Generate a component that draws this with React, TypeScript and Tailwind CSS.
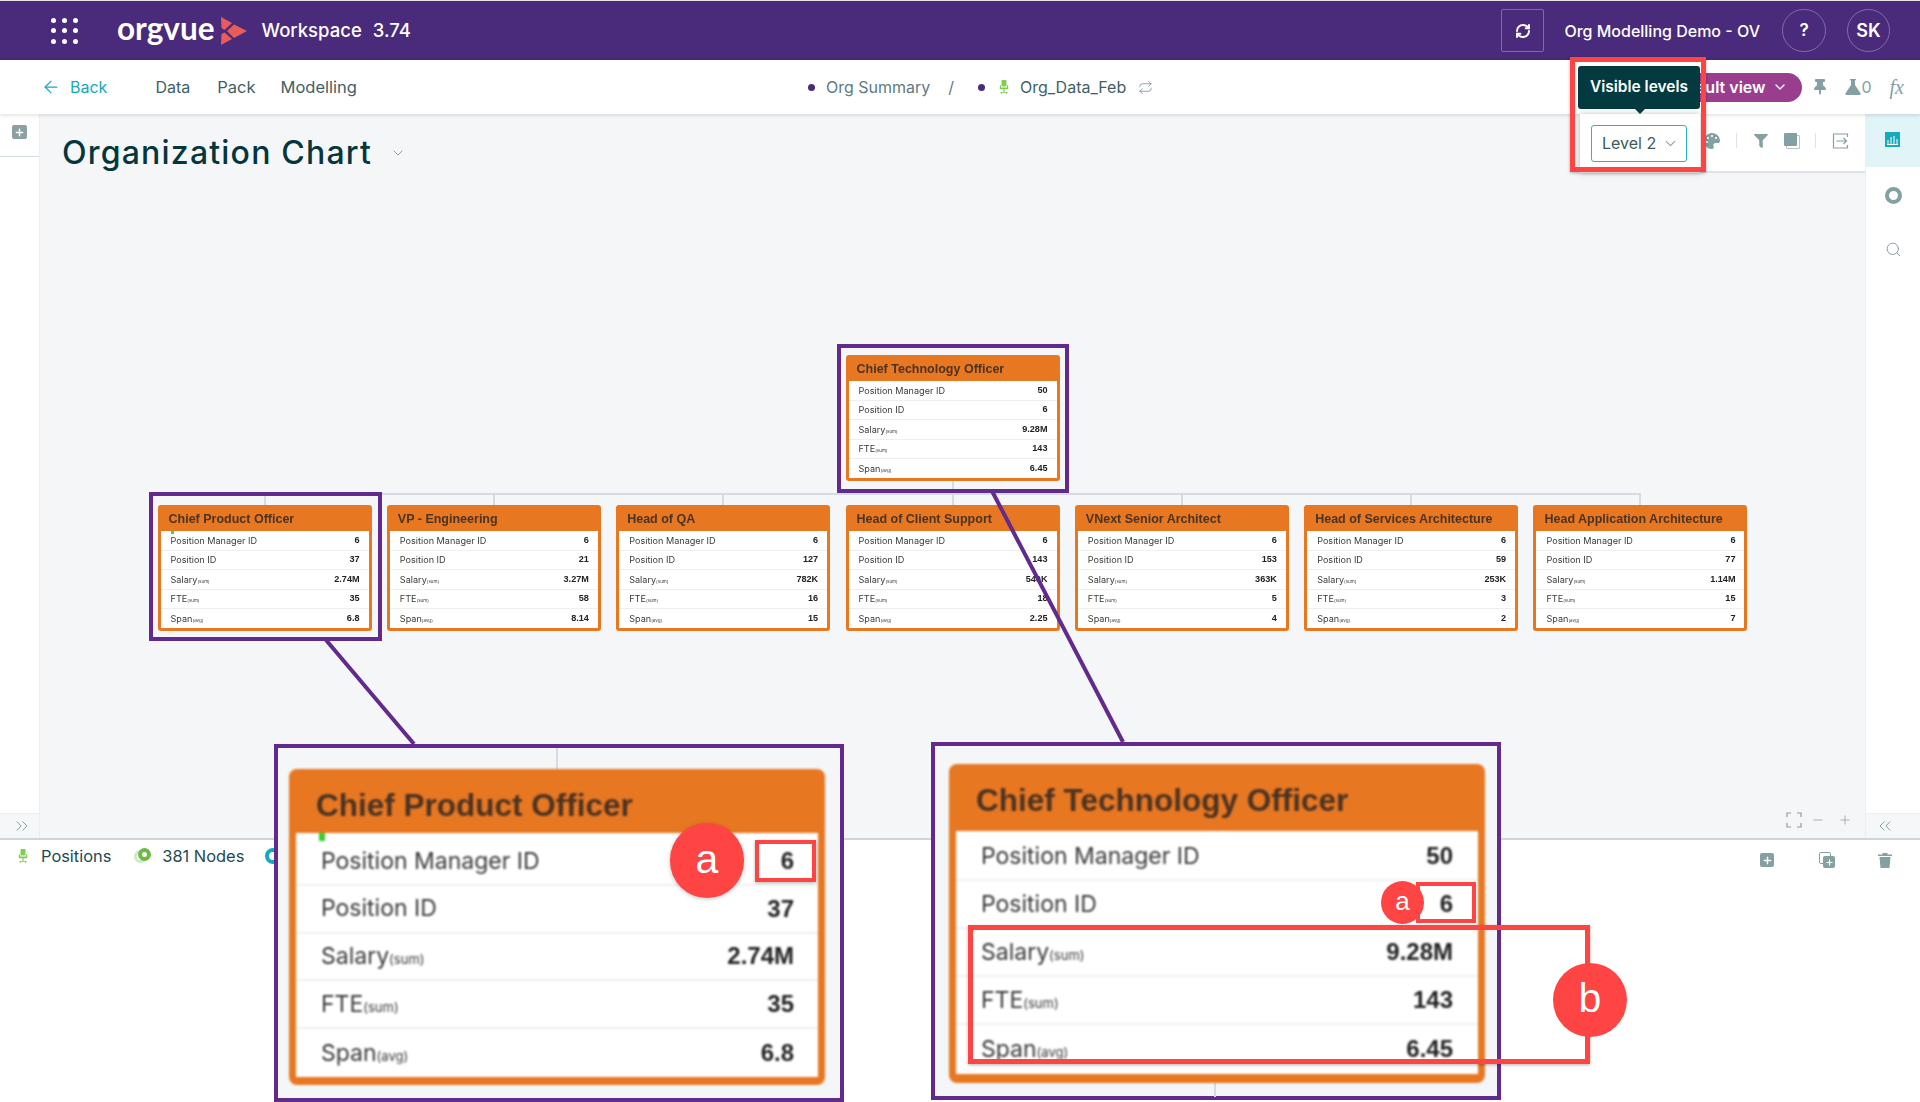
import React from "react";
import { ArrowLeft, ChevronDown, RefreshCw, Search, Repeat, ChevronsRight, ChevronsLeft, Plus, Minus } from "lucide-react";
import { FaFilter, FaPalette, FaThumbtack } from "react-icons/fa";

type CardData = { title: string; rows: [string, string, string, string, string] };

const S = {
  sm: {
    card: "w-[214px] h-[126px] rounded-[3px] blur-[0.45px]",
    head: "h-[26px] pl-[11px] pt-[2px] text-[12.5px]",
    body: "mx-[3px] h-[97px] pt-[1px]",
    row: "h-[19.2px] pl-[10px] pr-[9px] text-[9.1px]",
    sub: "text-[4.5px]",
    val: "",
    div: "border-b border-[#eef0f0]",
  },
  lg: {
    card: "w-[536px] h-[316px] rounded-[8px] blur-[1px]",
    head: "h-[64px] pl-[27px] pt-[9px] text-[31.5px]",
    body: "mx-[7px] h-[244px] pt-[5px]",
    row: "h-[47.8px] pl-[25px] pr-[24px] text-[23px]",
    sub: "text-[13px]",
    val: "text-[24px]",
    div: "border-b-2 border-[#eef0f0]",
  },
  lg2: {
    card: "w-[536px] h-[319px] rounded-[8px] blur-[1px]",
    head: "h-[67px] pl-[27px] pt-[6px] text-[31.5px]",
    body: "mx-[7px] h-[243px] pt-[2px]",
    row: "h-[48px] pl-[25px] pr-[25px] text-[23px]",
    sub: "text-[13px]",
    val: "text-[24px]",
    div: "border-b-2 border-[#eef0f0]",
  },
};

function Card({ data, size, flag }: { data: CardData; size: "sm" | "lg" | "lg2"; flag?: boolean }) {
  const s = S[size];
  const labels = [
    { l: "Position Manager ID" },
    { l: "Position ID" },
    { l: "Salary", u: "(sum)" },
    { l: "FTE", u: "(sum)" },
    { l: "Span", u: "(avg)" },
  ];
  return (
    <div className={`relative overflow-hidden bg-[#e87722] shrink-0 [font-family:'Liberation_Sans',sans-serif] ${s.card}`}>
      <div className={`flex items-center font-bold text-[#4a3322] ${s.head}`}>{data.title}</div>
      <div className={`relative flex flex-col bg-white ${s.body}`}>
        {labels.map((r, i) => (
          <div key={r.l} className={`shrink-0 flex items-center justify-between text-[#3a3a3a] [font-family:Inter,sans-serif] ${s.row} ${i < 4 ? s.div : ""}`}>
            <span>
              {r.l}
              {r.u ? <span className={s.sub}>{r.u}</span> : null}
            </span>
            <span className={`font-bold text-[#222] [font-family:'Liberation_Sans',sans-serif] ${s.val}`}>{data.rows[i]}</span>
          </div>
        ))}
        {flag ? (
          size === "sm" ? (
            <span className="absolute left-[10px] top-0 w-[3px] h-[3px] bg-[#35e02a]" />
          ) : (
            <span className="absolute left-[23px] top-0 w-[6px] h-[8px] bg-[#35d02a]" />
          )
        ) : null}
      </div>
    </div>
  );
}

const top: CardData = { title: "Chief Technology Officer", rows: ["50", "6", "9.28M", "143", "6.45"] };
const cards: CardData[] = [
  { title: "Chief Product Officer", rows: ["6", "37", "2.74M", "35", "6.8"] },
  { title: "VP - Engineering", rows: ["6", "21", "3.27M", "58", "8.14"] },
  { title: "Head of QA", rows: ["6", "127", "782K", "16", "15"] },
  { title: "Head of Client Support", rows: ["6", "143", "540K", "18", "2.25"] },
  { title: "VNext Senior Architect", rows: ["6", "153", "363K", "5", "4"] },
  { title: "Head of Services Architecture", rows: ["6", "59", "253K", "3", "2"] },
  { title: "Head Application Architecture", rows: ["6", "77", "1.14M", "15", "7"] },
];

function Chair({ className }: { className?: string }) {
  return (
    <svg viewBox="0 0 12 18" className={className} fill="currentColor">
      <rect x="3" y="0.5" width="6" height="8" rx="1.2" />
      <rect x="1" y="7" width="1.4" height="4" />
      <rect x="9.6" y="7" width="1.4" height="4" />
      <rect x="1" y="9.5" width="10" height="2.2" rx="0.6" />
      <rect x="5.3" y="11" width="1.4" height="4" />
      <path d="M1.5 15h9v1h-1v1.5h-1V16h-5v1.5h-1V16h-1z" />
    </svg>
  );
}

function Ring({ className }: { className?: string }) {
  return <span className={`inline-block rounded-full ${className}`} />;
}

export default function App() {
  return (
    <div className="relative w-[1920px] h-[1102px] overflow-hidden bg-white flex flex-col text-[#3f5f66] [font-family:Inter,sans-serif]">
      {/* top bar */}
      <div className="shrink-0 h-[1px] bg-[#e5e5e5]" />
      <header className="shrink-0 h-[59px] bg-[#4a2a7b] flex items-center text-white">
        <div className="ml-[51px] grid grid-cols-3 gap-x-[6px] gap-y-[5.5px]">
          {Array.from({ length: 9 }).map((_, i) => (
            <span key={i} className="w-[5px] h-[5px] rounded-full bg-white" />
          ))}
        </div>
        <span className="ml-[39px] text-[31.5px] font-bold leading-none [font-family:Lato,sans-serif] pb-[3px]">orgvue</span>
        <svg viewBox="0 0 27 28" className="ml-[5px] w-[27px] h-[28px]" fill="#e85d5a">
          <path d="M1 0 L12 6 L4.5 13 L1.5 11 Z" />
          <path d="M1 28 L12 22 L4.5 15.5 L1.5 17 Z" />
          <path d="M7 14 L14 7.5 L27 14 L14 21 Z" />
        </svg>
        <span className="ml-[15px] text-[18.5px] font-medium">Workspace</span>
        <span className="ml-[11px] text-[18.5px] font-medium">3.74</span>
        <div className="ml-auto flex items-center pr-[30px]">
          <div className="w-[43px] h-[43px] rounded-[2px] border border-white/30 flex items-center justify-center">
            <RefreshCw className="w-[16px] h-[16px]" strokeWidth={3} />
          </div>
          <span className="ml-[20px] text-[16px] font-medium">Org Modelling Demo - OV</span>
          <div className="ml-[22px] w-[44px] h-[43px] rounded-full border border-white/30 flex items-center justify-center text-[17px] font-semibold">?</div>
          <div className="ml-[21px] w-[43px] h-[43px] rounded-full border border-white/30 flex items-center justify-center text-[18px] font-semibold">SK</div>
        </div>
      </header>

      {/* nav bar */}
      <nav className="relative z-10 shrink-0 h-[54px] bg-white flex items-center shadow-[0_1px_4px_rgba(0,0,0,0.15)] text-[16px]">
        <ArrowLeft className="ml-[41px] w-[20px] h-[20px] text-[#17a8bd]" strokeWidth={1.5} />
        <span className="ml-[9px] text-[#17a8bd]">Back</span>
        <span className="ml-[48px]">Data</span>
        <span className="ml-[27px] text-[16.5px]">Pack</span>
        <span className="ml-[25px] text-[16.5px]">Modelling</span>
        <span className="ml-[451px] w-[7px] h-[7px] rounded-full bg-[#4a2a7b]" />
        <span className="ml-[11px] text-[#5d7a80]">Org Summary</span>
        <span className="ml-[18px] text-[#5d7a80]">/</span>
        <span className="ml-[24px] w-[7px] h-[7px] rounded-full bg-[#4a2a7b]" />
        <Chair className="ml-[14px] w-[10px] h-[16px] text-[#7ccf4f]" />
        <span className="ml-[11px]">Org_Data_Feb</span>
        <Repeat className="ml-[12px] w-[15px] h-[15px] text-[#8aa0a3]" strokeWidth={1.5} />
        <div className="ml-auto flex items-center h-[29px] w-[145px] rounded-full bg-[#9b3d8f] text-white font-semibold justify-end pr-[14px]">
          <span>Default view</span>
          <ChevronDown className="ml-[7px] w-[16px] h-[16px]" strokeWidth={2} />
        </div>
        <FaThumbtack className="ml-[12px] w-[12px] h-[16px] text-[#85a0a3]" />
        <svg viewBox="0 0 16 16" className="ml-[19px] w-[16px] h-[16px] text-[#85a0a3]" fill="currentColor">
          <path d="M5 0h6v1.2h-1V6l5.5 8.3c.5.8 0 1.7-1 1.7H1.5c-1 0-1.5-.9-1-1.7L6 6V1.2H5z" />
        </svg>
        <span className="text-[16px] text-[#85a0a3]">0</span>
        <span className="ml-[18px] mr-[16px] text-[20px] italic text-[#85a0a3] [font-family:'Liberation_Serif',serif]">fx</span>
      </nav>

      {/* main */}
      <div className="flex-1 min-h-0 flex">
        {/* left rail */}
        <aside className="w-[40px] shrink-0 bg-white border-r border-[#eceff1] flex flex-col">
          <div className="h-[43px] border-b border-[#d5dcdc] pt-[11px] pl-[12px]">
            <div className="w-[15px] h-[14px] rounded-[2px] bg-[#8aa0a3] flex items-center justify-center">
              <Plus className="w-[11px] h-[11px] text-white" strokeWidth={3} />
            </div>
          </div>
          <div className="mt-auto h-[25px] bg-[#f5f7f9] border-t border-[#eceff1] flex items-center pl-[12px]">
            <ChevronsRight className="w-[20px] h-[20px] text-[#85a0a3]" strokeWidth={1.2} />
          </div>
        </aside>

        {/* canvas */}
        <main className="flex-1 min-w-0 bg-[#f5f6f8] flex flex-col">
          <div className="h-[59px] shrink-0 flex">
            <div className="flex items-center pl-[22px] pt-[18px]">
              <h1 className="text-[32px] font-medium text-[#04363d] tracking-[1.2px]">Organization Chart</h1>
              <ChevronDown className="ml-[18px] w-[16px] h-[16px] text-[#85a0a3]" strokeWidth={1.5} />
            </div>
            <div className="ml-auto w-[285px] bg-white border-b-2 border-[#dfe3e8] flex items-center pb-[4px] text-[#85a0a3]">
              <FaPalette className="ml-[124px] w-[16px] h-[16px]" />
              <span className="ml-[16px] w-px h-[15px] bg-[#dfe3e8]" />
              <FaFilter className="ml-[17px] w-[14px] h-[14px]" />
              <span className="relative ml-[16px] w-[15px] h-[15px]">
                <span className="absolute left-0 top-0 w-[13px] h-[13px] rounded-[1px] bg-[#85a0a3] z-[1]" />
                <span className="absolute left-[2px] top-[2px] w-[14px] h-[14px] rounded-[1px] border border-[#b6c6c8]" />
              </span>
              <span className="ml-[16px] w-px h-[15px] bg-[#dfe3e8]" />
              <svg viewBox="0 0 16 16" className="ml-[16px] w-[17px] h-[16px]" fill="none" stroke="currentColor" strokeWidth="1.2">
                <path d="M15 4V1H1v14h14v-3" />
                <path d="M4 8h10M11 5l3 3-3 3" />
              </svg>
            </div>
          </div>

          {/* tree */}
          <div className="flex-1 min-h-0 flex flex-col items-center pt-[182px]">
            <Card data={top} size="sm" />
            <div className="w-[2px] h-[12px] bg-[#d5dbe3]" />
            <div className="w-[1376px] h-[2px] bg-[#d5dbe3]" />
            <div className="flex gap-[15.33px]">
              {cards.map((c, i) => (
                <div key={c.title} className="flex flex-col items-center">
                  <div className="w-[2px] h-[10px] bg-[#d5dbe3]" />
                  <Card data={c} size="sm" flag={i === 0} />
                </div>
              ))}
            </div>
          </div>

          <div className="h-[24px] shrink-0 flex items-start justify-end text-[#85a0a3]">
            <svg viewBox="0 0 16 16" className="mt-[-2px] w-[16px] h-[16px]" fill="none" stroke="currentColor" strokeWidth="1.2">
              <path d="M1 5V1h4M11 1h4v4M15 11v4h-4M5 15H1v-4" />
            </svg>
            <Minus className="ml-[9px] mt-[-1px] w-[14px] h-[14px]" strokeWidth={1.3} />
            <Plus className="ml-[13px] mt-[-1px] w-[14px] h-[14px] mr-[13px]" strokeWidth={1.3} />
          </div>
        </main>

        {/* right rail */}
        <aside className="w-[55px] shrink-0 bg-white border-l border-[#eceff1] flex flex-col items-center text-[#85a0a3]">
          <div className="w-full h-[53px] bg-[#e1f4f7] flex items-center justify-center pb-[2px] pr-[2px]">
            <svg viewBox="0 0 15 15" className="w-[15px] h-[15px]">
              <rect width="15" height="15" fill="#16aabb" />
              <path d="M3 12V8M6 12V5M9 12V4M12 12V7M2 12.5h11" stroke="#fff" strokeWidth="1" />
            </svg>
          </div>
          <Ring className="mt-[20px] w-[17px] h-[17px] border-[4.5px] border-[#85a0a3]" />
          <Search className="mt-[37px] w-[17px] h-[17px]" strokeWidth={1.4} />
          <div className="mt-auto w-full h-[25px] bg-[#f5f7f9] border-t border-[#eceff1] flex items-center pl-[9px]">
            <ChevronsLeft className="w-[20px] h-[20px]" strokeWidth={1.2} />
          </div>
        </aside>
      </div>

      {/* bottom strip */}
      <div className="shrink-0 h-[264px] bg-white border-t-2 border-[#cfd6da]">
        <div className="h-[32px] flex items-center text-[16.4px] text-[#1d4a52]">
          <Chair className="ml-[18px] w-[10px] h-[16px] text-[#7ccf4f]" />
          <span className="ml-[13px]">Positions</span>
          <span className="relative ml-[25px] w-[16px] h-[16px]">
            <Ring className="absolute left-[-2px] top-[2px] w-[13px] h-[13px] border-[3px] border-[#cfe9c4]" />
            <Ring className="absolute left-[2px] top-0 w-[13px] h-[13px] border-[4px] border-[#6dbb45] bg-white" />
          </span>
          <span className="ml-[10px]">381 Nodes</span>
          <Ring className="ml-[21px] w-[16px] h-[16px] border-[4px] border-[#17a8bd]" />
          <div className="ml-auto mt-[8px] flex items-center text-[#85a0a3]">
            <div className="w-[14px] h-[14px] rounded-[2px] bg-[#85a0a3] flex items-center justify-center">
              <Plus className="w-[11px] h-[11px] text-white" strokeWidth={3} />
            </div>
            <span className="relative ml-[45px] w-[16px] h-[16px]">
              <span className="absolute left-0 top-0 w-[12px] h-[12px] rounded-[2px] border border-[#85a0a3]" />
              <span className="absolute left-[4px] top-[4px] w-[12px] h-[12px] rounded-[2px] bg-[#85a0a3] flex items-center justify-center">
                <Plus className="w-[9px] h-[9px] text-white" strokeWidth={3} />
              </span>
            </span>
            <svg viewBox="0 0 14 16" className="ml-[43px] mr-[28px] w-[14px] h-[16px]" fill="currentColor">
              <path d="M4.5 1h5v1.5H14V4H0V2.5h4.5zM1.5 5h11l-1 11h-9z" />
            </svg>
          </div>
        </div>
      </div>

      {/* annotation overlay */}
      <svg className="absolute left-0 top-0 z-20 w-[1920px] h-[1102px] pointer-events-none" viewBox="0 0 1920 1102" fill="none" stroke="#622a8c" strokeWidth="4">
        <path d="M326 640 L414 744" />
        <path d="M992 491 L1123 742" />
        <rect x="839" y="346" width="228" height="145" />
        <rect x="151" y="494" width="229" height="145" />
      </svg>

      <div className="absolute z-20 left-[274px] top-[744px] w-[570px] h-[358px] border-[4px] border-[#622a8c] bg-[#f5f6f8]">
        <div className="ml-[278px] w-[2px] h-[21px] bg-[#d5dbe3]" />
        <div className="ml-[11px]">
          <Card data={cards[0]} size="lg" flag />
        </div>
      </div>
      <div className="absolute z-20 left-[931px] top-[742px] w-[570px] h-[358px] border-[4px] border-[#622a8c] bg-[#f5f6f8]">
        <div className="ml-[14px] mt-[18px]">
          <Card data={top} size="lg2" />
        </div>
        <div className="ml-[279px] w-[2px] h-[14px] bg-[#d5dbe3]" />
      </div>

      {/* red marks */}
      <div className="absolute z-30 left-[755px] top-[840px] w-[61px] h-[42px] border-[4px] border-[#ff4444] shadow-[0_1px_3px_rgba(0,0,0,0.3)]" />
      <div className="absolute z-30 left-[670px] top-[823px] w-[74px] h-[75px] rounded-full bg-[#ff4444] shadow-[0_1px_4px_rgba(0,0,0,0.25)] flex items-center justify-center text-white text-[41px] leading-none pb-[3px] [font-family:'Liberation_Sans',sans-serif]">a</div>

      <div className="absolute z-30 left-[1416px] top-[882px] w-[60px] h-[41px] border-[4px] border-[#ff4444]" />
      <div className="absolute z-30 left-[1381px] top-[881px] w-[43px] h-[43px] rounded-full bg-[#ff4444] flex items-center justify-center text-white text-[26px] leading-none pb-[3px] [font-family:'Liberation_Sans',sans-serif]">a</div>
      <div className="absolute z-30 left-[968px] top-[925px] w-[622px] h-[139px] border-[5px] border-[#ff4444] shadow-[0_1px_3px_rgba(0,0,0,0.3)]" />
      <div className="absolute z-30 left-[1553px] top-[963px] w-[74px] h-[74px] rounded-full bg-[#ff4444] flex items-center justify-center text-white text-[41px] leading-none pb-[3px] [font-family:'Liberation_Sans',sans-serif]">b</div>

      {/* tooltip + popover */}
      <div className="absolute z-30 left-[1580px] top-[114px] w-[120px] h-[59px] bg-white shadow-[0_0_6px_rgba(0,0,0,0.25)]" />
      <div className="absolute z-30 left-[1591px] top-[125px] w-[96px] h-[37px] rounded-[3px] border border-[#2bb4c6] bg-white flex items-center pl-[10px] pb-[1px] text-[16px] text-[#3a5a60]">
        Level 2
        <ChevronDown className="ml-[6px] w-[17px] h-[17px] text-[#85a0a3]" strokeWidth={1.5} />
      </div>
      <div className="absolute z-30 left-[1578px] top-[66px] w-[122px] h-[43px] rounded-[3px] bg-[#023a40] flex items-center justify-center pb-[2px] text-white text-[15.5px] font-semibold">Visible levels</div>
      <div className="absolute z-30 left-[1635px] top-[109px] w-0 h-0 border-x-[5px] border-x-transparent border-t-[5px] border-t-[#023a40]" />
      <div className="absolute z-30 left-[1570px] top-[57px] w-[136px] h-[115px] border-[5px] border-[#ff4444] shadow-[0_1px_3px_rgba(0,0,0,0.3)]" />
    </div>
  );
}
